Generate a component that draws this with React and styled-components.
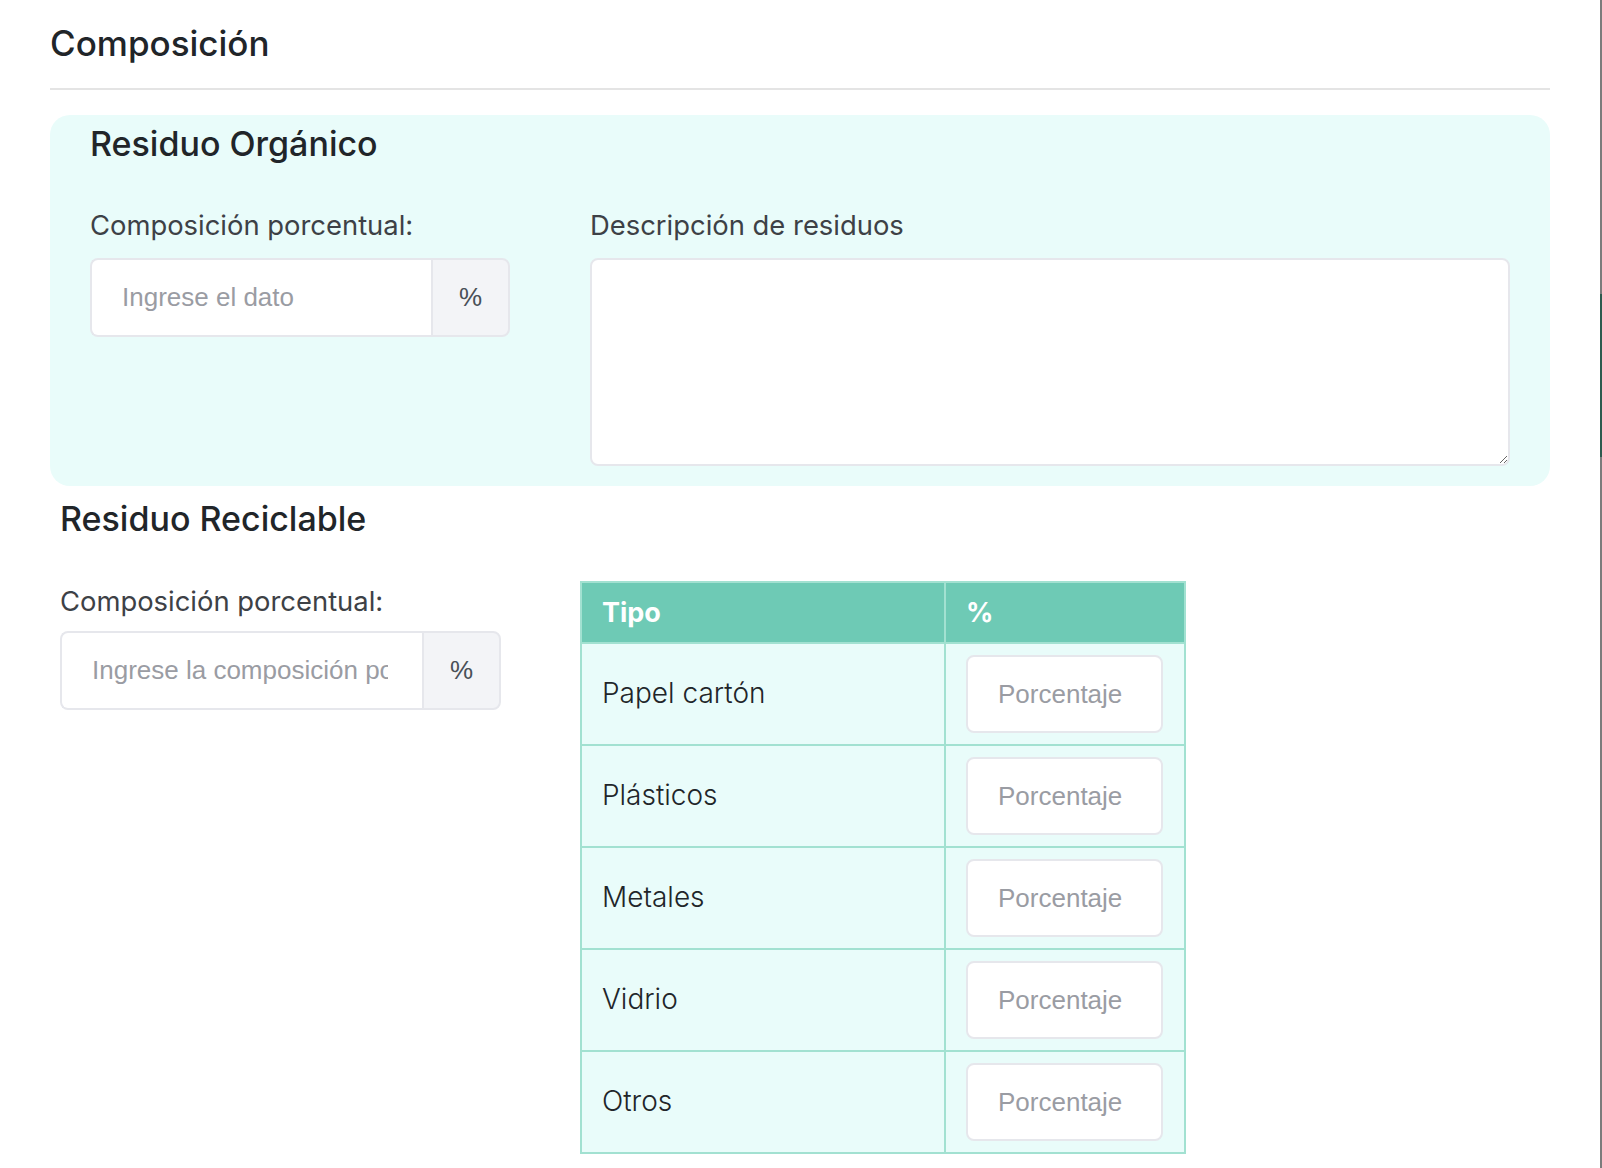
import React from 'react';
import styled, { createGlobalStyle } from 'styled-components';

const GlobalStyle = createGlobalStyle`
  * {
    box-sizing: border-box;
  }
  body {
    margin: 0;
    background: #ffffff;
    font-family: 'Inter', 'Noto Sans', sans-serif;
    color: #212529;
  }
`;

const Page = styled.div`
  display: flex;
  min-height: 1168px;
`;

const Main = styled.main`
  flex: 1;
  padding: 23px 50px 0 50px;
`;

const Edge = styled.div`
  width: 2px;
  background: #7c7c7c;
  display: flex;
  flex-direction: column;
`;

const EdgeMark = styled.div`
  margin-top: 294px;
  height: 163px;
  background: #2e5b4f;
`;

const Title = styled.h2`
  margin: 0;
  font-size: 35px;
  line-height: 40px;
  font-weight: 500;
  color: #212529;
  padding-bottom: 25px;
  border-bottom: 2px solid #e4e4e4;
`;

const Panel = styled.section`
  margin-top: 25px;
  background: #e9fcfa;
  border-radius: 20px;
  padding: 9px 40px 20px 40px;
`;

const Section = styled.section`
  margin-top: 13px;
  padding-left: 10px;
`;

const Heading = styled.h3`
  margin: 0;
  font-size: 34px;
  line-height: 40px;
  font-weight: 500;
  color: #212529;
`;

const Grid = styled.div`
  display: grid;
  grid-template-columns: ${(p) => p.$left}px 1fr;
  column-gap: ${(p) => p.$gap}px;
  margin-top: ${(p) => p.$top}px;
  align-items: start;
`;

const Field = styled.div`
  display: flex;
  flex-direction: column;
  padding-top: ${(p) => p.$pad || 0}px;
`;

const Label = styled.label`
  font-size: 27.4px;
  line-height: 32px;
  font-weight: 400;
  color: #3d4146;
  margin-bottom: ${(p) => p.$gap || 17}px;
`;

const InputGroup = styled.div`
  display: flex;
  height: 79px;
`;

const Input = styled.input`
  flex: 1;
  min-width: 0;
  height: 100%;
  border: 2px solid #e6e7ec;
  border-right: none;
  border-radius: 8px 0 0 8px;
  background: #ffffff;
  padding: 0 34px 0 30px;
  font-family: 'Liberation Sans', Arial, sans-serif;
  font-size: 26px;
  color: #495057;
  outline: none;

  &::placeholder {
    color: #9a9ca3;
  }
`;

const Addon = styled.span`
  width: 79px;
  display: flex;
  align-items: center;
  justify-content: center;
  background: #f3f4f7;
  border: 2px solid #e6e7ec;
  border-radius: 0 8px 8px 0;
  font-family: 'Liberation Sans', Arial, sans-serif;
  font-size: 26px;
  color: #495057;
`;

const TextArea = styled.textarea`
  width: 100%;
  height: 208px;
  border: 2px solid #e6e7ec;
  border-radius: 8px;
  background: #ffffff;
  padding: 16px 30px;
  font-family: 'Liberation Sans', Arial, sans-serif;
  font-size: 26px;
  outline: none;
`;

const Table = styled.table`
  width: 606px;
  border-collapse: collapse;
  border: 2px solid #a2e1d1;
  background: #e9fcfa;
`;

const HeadCell = styled.th`
  height: 61px;
  padding: 0 20px;
  text-align: left;
  background: #6ecab5;
  color: #ffffff;
  font-size: 27px;
  font-weight: 700;
  border: 2px solid #a2e1d1;
  width: ${(p) => p.$width}px;
`;

const Cell = styled.td`
  padding: 11px 20px 11px 20px;
  border: 2px solid #a2e1d1;
  font-size: 28px;
  line-height: 32px;
  font-weight: 300;
  color: #212529;
  vertical-align: middle;
`;

const CellText = styled.span`
  display: block;
  margin-top: -3px;
`;

const CellInput = styled.input`
  display: block;
  width: 197px;
  height: 78px;
  border: 2px solid #e6e7ec;
  border-radius: 8px;
  background: #ffffff;
  padding: 0 30px;
  font-family: 'Liberation Sans', Arial, sans-serif;
  font-size: 26px;
  color: #495057;
  outline: none;

  &::placeholder {
    color: #9a9ca3;
  }
`;

const tipos = ['Papel cartón', 'Plásticos', 'Metales', 'Vidrio', 'Otros'];

const App = () => {
  return (
    <>
      <GlobalStyle />
      <Page>
        <Main>
          <Title>Composición</Title>

          <Panel>
            <Heading>Residuo Orgánico</Heading>
            <Grid $left={420} $gap={80} $top={45}>
              <Field>
                <Label htmlFor="organico">Composición porcentual:</Label>
                <InputGroup>
                  <Input id="organico" type="text" placeholder="Ingrese el dato" />
                  <Addon>%</Addon>
                </InputGroup>
              </Field>
              <Field>
                <Label htmlFor="descripcion">Descripción de residuos</Label>
                <TextArea id="descripcion" />
              </Field>
            </Grid>
          </Panel>

          <Section>
            <Heading>Residuo Reciclable</Heading>
            <Grid $left={441} $gap={79} $top={42}>
              <Field $pad={4}>
                <Label htmlFor="reciclable" $gap={14}>
                  Composición porcentual:
                </Label>
                <InputGroup>
                  <Input
                    id="reciclable"
                    type="text"
                    placeholder="Ingrese la composición porcentual"
                  />
                  <Addon>%</Addon>
                </InputGroup>
              </Field>
              <Table>
                <thead>
                  <tr>
                    <HeadCell $width={366}>Tipo</HeadCell>
                    <HeadCell $width={240}>%</HeadCell>
                  </tr>
                </thead>
                <tbody>
                  {tipos.map((tipo) => (
                    <tr key={tipo}>
                      <Cell>
                        <CellText>{tipo}</CellText>
                      </Cell>
                      <Cell>
                        <CellInput type="text" placeholder="Porcentaje" />
                      </Cell>
                    </tr>
                  ))}
                </tbody>
              </Table>
            </Grid>
          </Section>
        </Main>
        <Edge>
          <EdgeMark />
        </Edge>
      </Page>
    </>
  );
};

export default App;
